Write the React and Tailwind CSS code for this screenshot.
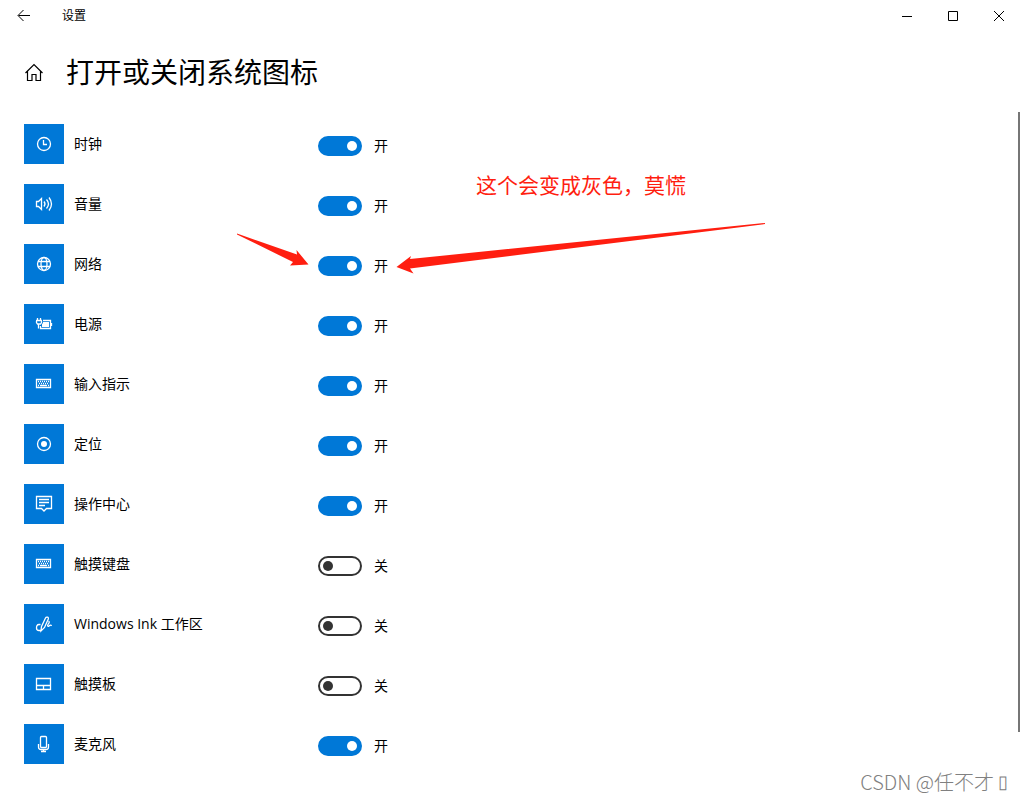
import { useState } from "react";

const icons = {
  clock: (
    <>
      <circle cx="10" cy="10" r="6.5" />
      <path d="M9.5 6v4.5H13" />
    </>
  ),
  volume: (
    <>
      <path d="M2.5 7.5h2l3-3v11l-3-3h-2z" />
      <path d="M10 7.5q2 2.5 0 5" />
      <path d="M12.5 5.5q4 4.5 0 9" />
      <path d="M15 3.5q5 6.5 0 13" />
    </>
  ),
  globe: (
    <>
      <circle cx="10" cy="10" r="6.5" />
      <ellipse cx="10" cy="10" rx="3" ry="6.5" />
      <path d="M4 7.5h12M4 12.5h12" />
    </>
  ),
  power: (
    <>
      <path d="M3.5 4v2.5M6.5 4v2.5M2 6.5h6M2.5 7v1.5l1 1.5h3l1-1.5V7M4.5 10v4.5" />
      <path d="M9 6.5h7.5v8h-10v-2.5" />
      <path d="M17.5 9v3" />
      <path d="M9 8h6v5H8v-3l1-1z" fill="currentColor" stroke="none" />
    </>
  ),
  keyboard: (
    <>
      <path d="M2.5 5.5h14v8h-14z" />
      <path d="M4 7.5h11M5 9.5h10" strokeDasharray="1 1" />
      <path d="M4 11.5h1M6 11.5h7M14 11.5h1" />
    </>
  ),
  location: (
    <>
      <circle cx="10" cy="10" r="6.5" />
      <circle cx="10" cy="10" r="3" fill="currentColor" stroke="none" />
    </>
  ),
  action: (
    <>
      <path d="M2.5 2.5h15v12h-5L10 17l-2.5-2.5h-5z" />
      <path d="M5 5.5h10M5 8.5h10M5 11.5h6" />
    </>
  ),
  ink: (
    <>
      <path d="M7.5 12.5L11.5 4c.8-1.600 3.500-1 2.800 1L10.500 13.500 7 17z" />
      <path d="M6.5 10.5H5c-2 0-2.500 1.500-2.500 3.500s1 2.500 2.500 2.500h2" />
      <path d="M14.500 7c1.500 1 .5 2-.5 3.500-1 1.500 0 2.500 1 1.500s2-1.500 2.500 0" />
    </>
  ),
  touchpad: <path d="M2.5 4.5h14v11h-14zM2.5 11.5h14M9.5 11.5v4" />,
  mic: (
    <>
      <rect x="6.5" y="2.5" width="6" height="11" rx="1" />
      <path d="M4.5 10v3q0 2.5 2.5 2.5h5q2.5 0 2.5-2.5v-3M9.5 15.5v2M7 17.5h5" />
    </>
  ),
};

const initialItems = [
  { id: "clock", icon: "clock", label: "时钟", on: true },
  { id: "volume", icon: "volume", label: "音量", on: true },
  { id: "network", icon: "globe", label: "网络", on: true },
  { id: "power", icon: "power", label: "电源", on: true },
  { id: "input", icon: "keyboard", label: "输入指示", on: true },
  { id: "location", icon: "location", label: "定位", on: true },
  { id: "action", icon: "action", label: "操作中心", on: true },
  { id: "touch-keyboard", icon: "keyboard", label: "触摸键盘", on: false },
  { id: "ink", icon: "ink", label: "Windows Ink 工作区", on: false },
  { id: "touchpad", icon: "touchpad", label: "触摸板", on: false },
  { id: "mic", icon: "mic", label: "麦克风", on: true },
];

function TitleBar() {
  return (
    <header className="flex h-8 items-center justify-between">
      <div className="flex h-full items-center">
        <button aria-label="返回" className="flex h-full w-12 items-center justify-center">
          <svg width="14" height="14" viewBox="0 0 14 14" fill="none" stroke="currentColor">
            <path d="M13 6.5H1.5M6.5 1L1 6.5 6.5 12" />
          </svg>
        </button>
        <span className="ml-3.5 text-xs">设置</span>
      </div>
      <div className="flex h-full">
        <button aria-label="最小化" className="flex w-[46px] items-center justify-center">
          <svg width="10" height="10" viewBox="0 0 10 10" fill="none" stroke="currentColor">
            <path d="M0 5.5h10" />
          </svg>
        </button>
        <button aria-label="最大化" className="flex w-[46px] items-center justify-center">
          <svg width="10" height="10" viewBox="0 0 10 10" fill="none" stroke="currentColor">
            <path d="M.5.5h9v9h-9z" />
          </svg>
        </button>
        <button aria-label="关闭" className="flex w-[46px] items-center justify-center">
          <svg width="10" height="10" viewBox="0 0 10 10" fill="none" stroke="currentColor">
            <path d="M0 0l10 10M10 0L0 10" />
          </svg>
        </button>
      </div>
    </header>
  );
}

function SettingRow({ item, onToggle }) {
  return (
    <li className="flex h-10 items-center">
      <div className="flex size-10 items-center justify-center bg-[#0078d7] text-white">
        <svg width="20" height="20" viewBox="0 0 20 20" fill="none" stroke="currentColor" strokeWidth="1.3">
          {icons[item.icon]}
        </svg>
      </div>
      <label htmlFor={item.id} className="w-[254px] pl-2.5">
        {item.label}
      </label>
      <div className="flex items-center gap-3 pt-1">
        <input
          id={item.id}
          type="checkbox"
          role="switch"
          checked={item.on}
          onChange={() => onToggle(item.id)}
          className="flex h-5 w-11 appearance-none items-center rounded-full border-2 border-[#333] px-[3px] before:size-2.5 before:rounded-full before:bg-[#333] checked:justify-end checked:border-[#0078d7] checked:bg-[#0078d7] checked:before:bg-white"
        />
        <span>{item.on ? "开" : "关"}</span>
      </div>
    </li>
  );
}

export default function App() {
  const [items, setItems] = useState(initialItems);

  const handleToggle = (id) => {
    setItems(items.map((item) => (item.id === id ? { ...item, on: !item.on } : item)));
  };

  return (
    <div className="relative flex min-h-screen flex-col overflow-hidden bg-white font-['Open_Sans','Noto_Sans_CJK_SC',sans-serif] text-sm text-black">
      <TitleBar />
      <div className="flex h-20 items-center gap-[22px] pl-6">
        <a href="#home" aria-label="主页">
          <svg width="20" height="20" viewBox="0 0 20 20" fill="none" stroke="currentColor" strokeWidth="1.2">
            <path d="M1.5 11L10 2.5l8.5 8.5M3.5 9.5v9H8v-6h4v6h4.5v-9" />
          </svg>
        </a>
        <h1 className="text-[28px]">打开或关闭系统图标</h1>
      </div>
      <main className="flex justify-between pr-0.5">
        <ul className="flex flex-col gap-5 pt-3 pl-6">
          {items.map((item) => (
            <SettingRow key={item.id} item={item} onToggle={handleToggle} />
          ))}
        </ul>
        <div className="h-[620px] w-0.5 bg-[#767676]" />
      </main>

      <p className="absolute top-[169px] left-[476px] text-[21px] leading-8 text-[#ff1e10]">
        这个会变成灰色，莫慌
      </p>
      <svg
        className="pointer-events-none absolute top-[220px] left-[230px] text-[#ff1e10]"
        width="540"
        height="60"
        viewBox="230 220 540 60"
        fill="currentColor"
      >
        <path d="M237 233.5L297 254.5 296.5 250 308.5 264.5 290 265.5 293 262 237 234.5z" />
        <path d="M765 223L410 259 411 256 396.5 267 413.5 273.5 410 268.5 765 224z" />
      </svg>
      <p className="absolute right-3.5 bottom-0.5 flex items-center gap-1 font-['Noto_Sans_CJK_SC',sans-serif] text-xl leading-8 font-light text-[#808080]">
        CSDN @任不才
        <span className="font-['DejaVu_Sans',sans-serif] text-lg">▯</span>
      </p>
    </div>
  );
}
